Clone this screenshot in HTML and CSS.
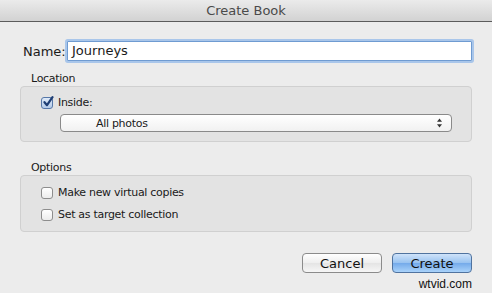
FILE: index.html
```html
<!DOCTYPE html>
<html lang="en">
  <head>
    <meta charset="UTF-8" />
    <title>Create Book</title>
    <link rel="stylesheet" href="styles.css">
  </head>
  <body>
    <div class="window">
      <div class="titlebar">Create Book</div>

      <div class="content">
        <div class="name-row">
          <label class="name-label">Name:</label>
          <div class="name-input">Journeys</div>
        </div>

        <div class="group-label">Location</div>
        <div class="group location">
          <div class="check-row">
            <span class="checkbox checked">
              <svg width="12" height="12" viewBox="0 0 12 12">
                <path d="M2.5 6.2 L5 9.2 L10.5 1.2" fill="none" stroke="#1f3f75" stroke-width="2.2" stroke-linecap="round" stroke-linejoin="round"/>
              </svg>
            </span>
            <span>Inside:</span>
          </div>
          <div class="popup">
            <span class="popup-text">All photos</span>
            <svg class="popup-arrows" width="7" height="10" viewBox="0 0 7 10">
              <path d="M3.5 0.5 L6 3.8 L1 3.8 Z" fill="#333"/>
              <path d="M3.5 9.5 L6 6.2 L1 6.2 Z" fill="#333"/>
            </svg>
          </div>
        </div>

        <div class="group-label options-label">Options</div>
        <div class="group options">
          <div class="check-row">
            <span class="checkbox"></span>
            <span>Make new virtual copies</span>
          </div>
          <div class="check-row">
            <span class="checkbox"></span>
            <span>Set as target collection</span>
          </div>
        </div>

        <div class="buttons">
          <button class="btn">Cancel</button>
          <button class="btn primary">Create</button>
        </div>
        <div class="watermark">wtvid.com</div>
      </div>
    </div>
  </body>
</html>
```

FILE: styles.css
```css
body {
  margin: 0;
  font-family: "DejaVu Sans", sans-serif;
  font-size: 11px;
  letter-spacing: -0.3px;
  color: #1a1a1a;
  background: #ececec;
}
.window {
  width: 492px;
  height: 293px;
  background: #ececec;
  overflow: hidden;
}
.titlebar {
  height: 21px;
  line-height: 22px;
  text-align: center;
  font-size: 13px;
  letter-spacing: 0;
  color: #4a4a4a;
  background: linear-gradient(#ebebeb, #d2d2d2);
  border-bottom: 1px solid #5c5c5c;
}
.content {
  padding: 0 20px;
}
.name-row {
  display: flex;
  align-items: center;
  margin-top: 19px;
}
.name-label {
  padding-left: 3px;
  width: 44px;
  white-space: nowrap;
  font-size: 13px;
  letter-spacing: 0;
}
.name-input {
  flex: 1;
  height: 18px;
  line-height: 18px;
  padding: 0 4px;
  font-size: 13px;
  letter-spacing: 0;
  background: #fff;
  border: 1px solid #6f9bd1;
  box-shadow: 0 0 0 2px #a9c6ea;
  border-radius: 1px;
}
.group-label {
  margin-top: 12px;
  padding-left: 11px;
  height: 12px;
  line-height: 12px;
}
.options-label {
  margin-top: 20px;
}
.group {
  margin-top: 1px;
  background: #e3e3e3;
  border: 1px solid #d0d0d0;
  border-radius: 4px;
  box-sizing: border-box;
}
.location {
  height: 56px;
  padding: 10px 0 0 20px;
}
.options {
  height: 57px;
  padding: 11px 0 0 20px;
}
.check-row {
  display: flex;
  align-items: center;
  gap: 5px;
  height: 12px;
  line-height: 12px;
}
.options .check-row + .check-row {
  margin-top: 10px;
}
.checkbox {
  width: 10px;
  height: 10px;
  border: 1px solid #8d8d8d;
  border-radius: 3px;
  background: linear-gradient(#ffffff, #ececec);
  position: relative;
}
.checkbox.checked {
  border-color: #5677a8;
  background: linear-gradient(#dfeaf8, #b4cbea);
}
.checkbox svg {
  position: absolute;
  left: 0;
  top: -2px;
}
.popup {
  display: flex;
  align-items: center;
  justify-content: space-between;
  margin: 5px 19px 0 19px;
  height: 16px;
  padding: 0 8px 0 35px;
  border: 1px solid #8a8a8a;
  border-radius: 4px;
  background: linear-gradient(#ffffff, #f1f1f1);
}
.buttons {
  display: flex;
  justify-content: flex-end;
  gap: 10px;
  margin-top: 21px;
}
.btn {
  width: 80px;
  height: 20px;
  padding: 0;
  font-family: "DejaVu Sans", sans-serif;
  font-size: 13px;
  color: #111;
  border: 1px solid #8b8b8b;
  border-radius: 4px;
  background: linear-gradient(#ffffff, #eeeeee 50%, #e4e4e4 51%, #f6f6f6);
}
.btn.primary {
  border-color: #50739f;
  background: linear-gradient(#cfe3fa, #97c2f0 50%, #74aaea 51%, #a9d2fa);
}
.watermark {
  text-align: right;
  margin-top: 5px;
  line-height: 12px;
  font-family: "Liberation Sans", sans-serif;
  font-size: 12px;
  letter-spacing: 0;
  color: #111;
}
```
